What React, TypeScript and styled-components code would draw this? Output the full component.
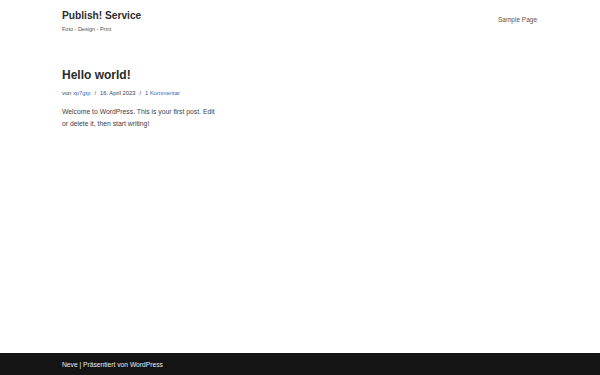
import styled, { createGlobalStyle } from "styled-components";

const GlobalStyle = createGlobalStyle`
  html, body {
    margin: 0;
    padding: 0;
    height: 100%;
  }
  body {
    font-family: "Liberation Sans", Arial, sans-serif;
    color: #404248;
    background: #ffffff;
  }
  #root {
    height: 100%;
  }
`;

const Page = styled.div`
  min-height: 375px;
  display: flex;
  flex-direction: column;
`;

const Header = styled.header`
  display: flex;
  justify-content: space-between;
  align-items: flex-start;
  padding: 10px 63px 0 62px;
`;

const Brand = styled.div`
  display: flex;
  flex-direction: column;
`;

const SiteTitle = styled.div`
  font-size: 10.2px;
  font-weight: 700;
  color: #2b2b2b;
  line-height: 12px;
`;

const Tagline = styled.div`
  margin-top: 4px;
  font-size: 5.5px;
  color: #505050;
  line-height: 6px;
`;

const Nav = styled.nav`
  padding-top: 6px;
  font-size: 6.5px;
  color: #555555;
`;

const Main = styled.main`
  flex: 1;
  padding: 36px 62px 0 62px;
`;

const PostTitle = styled.h1`
  margin: 0;
  font-size: 12px;
  font-weight: 700;
  color: #2b2b2b;
  line-height: 14px;
`;

const Meta = styled.div`
  margin-top: 8px;
  font-size: 5.8px;
  color: #404248;
  display: flex;
  gap: 4px;
`;

const MetaLink = styled.span`
  color: #3466b5;
`;

const Excerpt = styled.p`
  margin: 10px 0 0 0;
  width: 153px;
  font-size: 6.8px;
  line-height: 12px;
  color: #404248;
`;

const Footer = styled.footer`
  height: 22px;
  background: #141414;
  color: #ececec;
  font-size: 6.7px;
  display: flex;
  align-items: center;
  padding: 0 62px;
`;

export default function App() {
  return (
    <>
      <GlobalStyle />
      <Page>
        <Header>
          <Brand>
            <SiteTitle>Publish! Service</SiteTitle>
            <Tagline>Foto - Design - Print</Tagline>
          </Brand>
          <Nav>Sample Page</Nav>
        </Header>
        <Main>
          <PostTitle>Hello world!</PostTitle>
          <Meta>
            <span>
              von <MetaLink>xp7gtp</MetaLink>
            </span>
            <span>/</span>
            <span>16. April 2023</span>
            <span>/</span>
            <MetaLink>1 Kommentar</MetaLink>
          </Meta>
          <Excerpt>
            Welcome to WordPress. This is your first post. Edit or delete it,
            then start writing!
          </Excerpt>
        </Main>
        <Footer>Neve | Präsentiert von WordPress</Footer>
      </Page>
    </>
  );
}
